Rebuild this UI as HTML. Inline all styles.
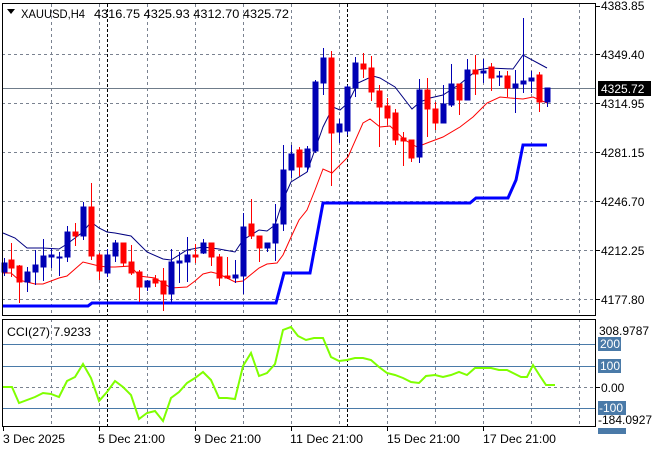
<!DOCTYPE html>
<html><head><meta charset="utf-8"><style>
html,body{margin:0;padding:0;background:#fff;}
svg{display:block;font-family:"Liberation Sans",sans-serif;}
</style></head><body>
<svg width="660" height="450" viewBox="0 0 660 450" xmlns="http://www.w3.org/2000/svg">
<rect width="660" height="450" fill="#fff"/>
<g stroke="#7a8290" stroke-width="1" stroke-dasharray="3,3" fill="none">
<path d="M51.5 4V315M99.5 4V315M147.5 4V315M195.5 4V315M243.5 4V315M291.5 4V315M339.5 4V315M387.5 4V315M435.5 4V315M483.5 4V315M531.5 4V315M579.5 4V315"/>
<path d="M2 54.5H595M2 103.5H595M2 152.5H595M2 201.5H595M2 250.5H595M2 299.5H595"/>
<path d="M51.5 319V426M99.5 319V426M147.5 319V426M195.5 319V426M243.5 319V426M291.5 319V426M339.5 319V426M387.5 319V426M435.5 319V426M483.5 319V426M531.5 319V426M579.5 319V426"/>
<path d="M2 387.5H595"/>
</g>
<g stroke="#000" stroke-width="1" stroke-dasharray="3,2"><path d="M107.5 4V315M107.5 319V426M347.5 4V315M347.5 319V426"/></g>
<path d="M2 88.5H595" stroke="#6f7c8a" stroke-width="1"/>
<polyline fill="none" stroke="#000080" stroke-width="1" points="3,233 15,238 27,248 43,248 59,249 67,244 83,232 91,222 99,228 107,232 115,233 131,236 147,252 163,259 171,260 187,250 203,247 219,249 235,252 243,240 259,230 267,231 275,225 283,200 291,182 307,172 323,127 333,107 340,110 348,103 358,83 373,76 380,78 395,87 412,109 420,102 430,98 443,95 460,84 477,70 490,68 513,69 523,55 547,68"/>
<polyline fill="none" stroke="#ff0000" stroke-width="1" points="3,273 11,273 19,280 35,284 43,284 59,278 67,276 83,262 91,264 99,266 107,267 115,267 131,266 139,276 155,278 171,288 187,287 195,281 203,274 211,272 219,274 235,282 243,281 259,268 267,264 277,263 283,255 292,235 299,220 307,210 315,190 323,169 332,173 348,157 363,123 370,119 380,127 390,126 405,140 417,147 427,143 443,137 460,127 473,117 487,103 500,97 510,98 523,99 533,97 547,103"/>
<polyline fill="none" stroke="#0000ff" stroke-width="3" points="3,306 88,306 92,303 276,303 284,273 310,273 323,203 470,203 476,198 508,198 516,180 523,145 547,145"/>
<g stroke-width="1">
<g stroke="#0000b4" fill="#0000b4">
<path d="M4.5 258V276M27.5 267V292M35.5 250V285M43.5 239V281M51.5 248V268M59.5 252V276M67.5 226V262M83.5 202V240M107.5 249V277M115.5 240V262M147.5 280V291M171.5 249V303M179.5 252V283M187.5 237V282M203.5 239V254M235.5 260V283M243.5 213V294M267.5 243V252M275.5 204V261M283.5 145V231M291.5 145V178M307.5 146V172M315.5 80V153M323.5 48V95M339.5 119V143M347.5 85V135M355.5 57V97M419.5 79V163M443.5 85V123M451.5 64V107M467.5 59V100M483.5 59V83M499.5 71V86M515.5 70V113M523.5 18V93M531.5 71V93M547.5 88V107"/>
<rect x="2" y="263" width="5" height="9"/><rect x="25" y="272" width="5" height="10"/><rect x="33" y="265" width="5" height="7"/><rect x="41" y="256" width="5" height="11"/><rect x="49" y="255" width="5" height="2"/><rect x="57" y="257" width="5" height="1"/><rect x="65" y="232" width="5" height="25"/><rect x="81" y="207" width="5" height="29"/><rect x="105" y="255" width="5" height="18"/><rect x="113" y="243" width="5" height="13"/><rect x="145" y="281" width="5" height="6"/><rect x="169" y="262" width="5" height="32"/><rect x="177" y="261" width="5" height="2"/><rect x="185" y="255" width="5" height="7"/><rect x="201" y="243" width="5" height="10"/><rect x="233" y="275" width="5" height="3"/><rect x="241" y="227" width="5" height="49"/><rect x="265" y="243" width="5" height="5"/><rect x="273" y="224" width="5" height="19"/><rect x="281" y="170" width="5" height="54"/><rect x="289" y="154" width="5" height="16"/><rect x="305" y="149" width="5" height="18"/><rect x="313" y="82" width="5" height="69"/><rect x="321" y="58" width="5" height="25"/><rect x="337" y="124" width="5" height="8"/><rect x="345" y="87" width="5" height="44"/><rect x="353" y="63" width="5" height="25"/><rect x="417" y="90" width="5" height="67"/><rect x="441" y="104" width="5" height="19"/><rect x="449" y="84" width="5" height="21"/><rect x="465" y="70" width="5" height="30"/><rect x="481" y="71" width="5" height="2"/><rect x="497" y="76" width="5" height="1"/><rect x="513" y="84" width="5" height="4"/><rect x="521" y="81" width="5" height="3"/><rect x="529" y="78" width="5" height="3"/><rect x="545" y="88" width="5" height="14"/>
</g>
<g stroke="#ff0000" fill="#ff0000">
<path d="M11.5 243V277M19.5 265V303M75.5 223V246M91.5 183V260M99.5 253V280M123.5 243V267M131.5 245V275M139.5 270V302M155.5 275V287M163.5 268V311M195.5 244V263M211.5 243V266M219.5 254V286M227.5 257V279M251.5 199V239M259.5 236V262M299.5 147V176M331.5 51V186M363.5 53V78M371.5 56V101M379.5 85V147M387.5 98V125M395.5 109V145M403.5 132V166M411.5 140V162M427.5 78V137M435.5 102V130M459.5 84V115M475.5 55V95M491.5 63V91M507.5 71V97M539.5 72V112"/>
<rect x="9" y="260" width="5" height="8"/><rect x="17" y="266" width="5" height="16"/><rect x="73" y="232" width="5" height="4"/><rect x="89" y="207" width="5" height="49"/><rect x="97" y="255" width="5" height="16"/><rect x="121" y="243" width="5" height="20"/><rect x="129" y="262" width="5" height="11"/><rect x="137" y="272" width="5" height="15"/><rect x="153" y="279" width="5" height="4"/><rect x="161" y="281" width="5" height="13"/><rect x="193" y="255" width="5" height="2"/><rect x="209" y="243" width="5" height="14"/><rect x="217" y="257" width="5" height="21"/><rect x="225" y="276" width="5" height="2"/><rect x="249" y="224" width="5" height="12"/><rect x="257" y="236" width="5" height="12"/><rect x="297" y="150" width="5" height="17"/><rect x="329" y="58" width="5" height="75"/><rect x="361" y="64" width="5" height="5"/><rect x="369" y="68" width="5" height="24"/><rect x="377" y="91" width="5" height="16"/><rect x="385" y="106" width="5" height="12"/><rect x="393" y="113" width="5" height="27"/><rect x="401" y="138" width="5" height="3"/><rect x="409" y="140" width="5" height="18"/><rect x="425" y="90" width="5" height="19"/><rect x="433" y="109" width="5" height="14"/><rect x="457" y="84" width="5" height="16"/><rect x="473" y="70" width="5" height="4"/><rect x="489" y="67" width="5" height="11"/><rect x="505" y="76" width="5" height="12"/><rect x="537" y="75" width="5" height="27"/>
</g>
</g>
<path d="M2 344.5H595M2 366.5H595M2 408.5H595" stroke="#4a7aa8" stroke-width="1"/>
<polyline fill="none" stroke="#7fff00" stroke-width="2" points="3,387 12,387 19,403 35,397 43,393 51,394 59,397 67,381 75,377 83,364 91,378 99,401 107,392 115,381 123,387 131,395 139,419 147,413 155,411 163,421 171,398 179,392 187,383 195,378 203,372 211,380 219,398 227,398 235,399 243,366 251,353 259,376 267,373 275,364 283,330 291,327 298,336 306,340 314,338 323,338 331,357 339,361 347,360 355,358 363,358 371,360 379,367 387,373 395,375 403,378 411,382 419,383 426,376 435,375 443,377 451,375 459,372 467,375 475,368 483,368 491,368 499,370 507,370 515,374 521,377 527,377 533,365 540,376 546,385 555,385"/>
<rect x="2.5" y="3.5" width="593" height="312" fill="none" stroke="#000"/>
<rect x="2.5" y="319.5" width="593" height="107" fill="none" stroke="#000"/>
<g stroke="#000"><path d="M596 6.5H600M596 54.5H600M596 103.5H600M596 152.5H600M596 201.5H600M596 250.5H600M596 299.5H600M596 387.5H600M99.5 427V431M195.5 427V431M291.5 427V431M387.5 427V431M483.5 427V431M3.5 427V431"/></g>
<g font-size="12" fill="#000">
<path d="M7 9H15L11 14Z" fill="#000"/>
<text x="21" y="18" textLength="64" lengthAdjust="spacingAndGlyphs">XAUUSD,H4</text>
<text x="94" y="18" textLength="195" lengthAdjust="spacingAndGlyphs">4316.75 4325.93 4312.70 4325.72</text>
<text x="7" y="336" textLength="84" lengthAdjust="spacingAndGlyphs">CCI(27) 7.9233</text>
<text x="601" y="10">4383.85</text>
<text x="601" y="59">4349.40</text>
<text x="601" y="108">4314.95</text>
<text x="601" y="157">4281.15</text>
<text x="601" y="206">4246.70</text>
<text x="601" y="255">4212.25</text>
<text x="601" y="304">4177.80</text>
<rect x="598" y="81" width="53" height="15" fill="#000"/>
<text x="601" y="93" fill="#fff">4325.72</text>
<text x="599" y="335">308.9787</text>
<rect x="598" y="337" width="23" height="14" fill="#4a7aa8"/>
<text x="600" y="348" fill="#fff">200</text>
<rect x="598" y="359" width="23" height="14" fill="#4a7aa8"/>
<text x="600" y="370" fill="#fff">100</text>
<text x="601" y="392">0.00</text>
<rect x="598" y="428" width="28" height="6" fill="#4a7aa8"/>
<rect x="598" y="401" width="28" height="14" fill="#4a7aa8"/>
<text x="599" y="412" fill="#fff">-100</text>
<text x="598" y="424">-184.0927</text>
<text x="3" y="443" textLength="62" lengthAdjust="spacingAndGlyphs">3 Dec 2025</text>
<text x="98" y="443" textLength="67" lengthAdjust="spacingAndGlyphs">5 Dec 21:00</text>
<text x="194" y="443" textLength="67" lengthAdjust="spacingAndGlyphs">9 Dec 21:00</text>
<text x="290" y="443" textLength="73" lengthAdjust="spacingAndGlyphs">11 Dec 21:00</text>
<text x="387" y="443" textLength="73" lengthAdjust="spacingAndGlyphs">15 Dec 21:00</text>
<text x="483" y="443" textLength="73" lengthAdjust="spacingAndGlyphs">17 Dec 21:00</text>
</g>
</svg>
</body></html>
